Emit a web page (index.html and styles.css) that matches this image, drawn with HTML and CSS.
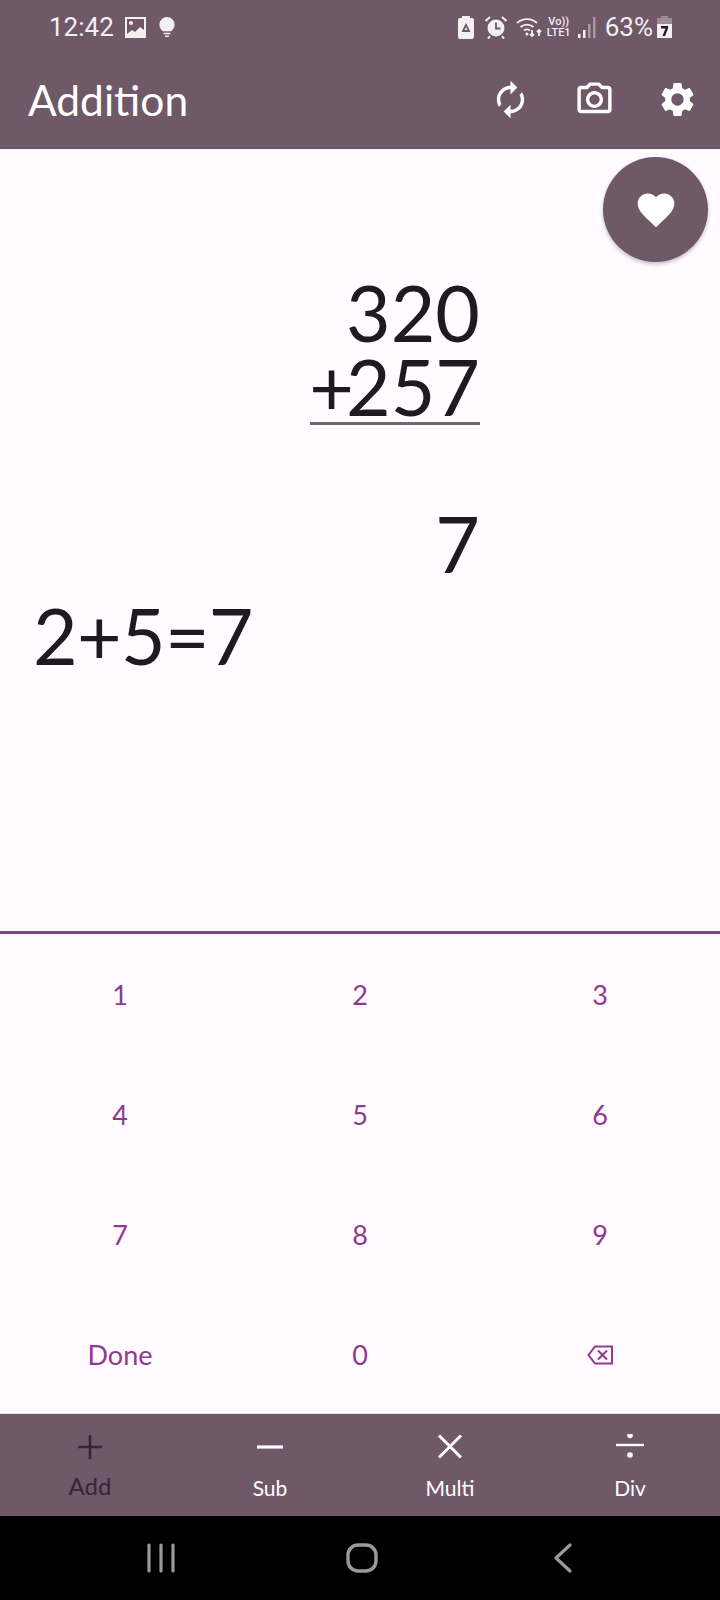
FILE: index.html
```html
<!DOCTYPE html>
<html lang="en">
<head>
    <meta charset="UTF-8">
    <meta name="viewport" content="width=device-width, initial-scale=1.0">
    <title>Addition</title>
    <link rel="stylesheet" href="styles.css">
</head>
<body>
<div class="phone">

    <header class="top">
        <div class="status">
            <div class="status-left">
                <span class="clock">12:42</span>
                <svg class="st-pic" viewBox="0 0 21 21"><path fill="#f3eff2" d="M0 0h21v21H0z"/><path fill="#6f5868" d="M2 2h17v11l-4-3-5 5-3-2-5 4z"/><circle cx="6" cy="6" r="2" fill="#f3eff2"/></svg>
                <svg class="st-bulb" viewBox="0 0 16 22"><path fill="#f3eff2" d="M8 0a8 8 0 0 1 8 8c0 3-2 5-3.500 7h-9C2 13 0 11 0 8a8 8 0 0 1 8-8zM4.500 16.500h7V18h-7zM6 19.500h4V21H6z"/></svg>
            </div>
            <div class="status-right">
                <svg class="st-save" viewBox="0 0 16 23"><path fill="#f3eff2" d="M4 0h8v2h2a2 2 0 0 1 2 2v17a2 2 0 0 1-2 2H2a2 2 0 0 1-2-2V4a2 2 0 0 1 2-2h2z"/><path fill="none" stroke="#6f5868" stroke-width="1.800" d="M5 15l3-6 3 6z"/></svg>
                <svg class="st-alarm" viewBox="0 0 24 24"><circle cx="12" cy="13" r="8.500" fill="#f3eff2"/><path fill="none" stroke="#6f5868" stroke-width="1.800" d="M12 7.500V13.500h4.500"/><path fill="none" stroke="#f3eff2" stroke-width="2" d="M1.500 6L6 2M22.500 6L18 2M6 21l-2 2.500M18 21l2 2.500"/></svg>
                <svg class="st-wifi" viewBox="0 0 28 24"><g fill="none" stroke="#f3eff2" stroke-width="1.800"><path d="M1 8a15 15 0 0 1 20 0M4.500 12a10 10 0 0 1 13 0M8 15.500a5 5 0 0 1 6 0"/><path d="M16 15v6M14 19l2 2 2-2M23 21v-6M21 17l2-2 2 2"/></g><circle cx="11" cy="19" r="1.500" fill="#f3eff2"/></svg>
                <div class="st-volte"><span>Vo))</span><span>LTE1</span></div>
                <svg class="st-signal" viewBox="0 0 18 22"><path fill="#f3eff2" d="M0 18h2.500v4H0zM5 14h2.500v8H5z"/><path fill="#a898a3" d="M10 8h2.500v14H10zM15 1h2.500v21H15z"/></svg>
                <span class="pct">63%</span>
                <svg class="st-batt" viewBox="0 0 15 22"><path fill="#9c8c97" d="M4 0h7v2h4v8H0V2h4z"/><path fill="#f3eff2" d="M0 8h15v14H0z"/><path fill="#1d1b20" d="M4 10h7v2.500L8 20H5.500l3-7.500H4z"/></svg>
            </div>
        </div>
        <div class="toolbar">
            <h1 class="title">Addition</h1>
            <div class="actions">
                <svg class="act" viewBox="0 0 24 24"><path fill="#fff" d="M12 6v3l4-4-4-4v3c-4.420 0-8 3.580-8 8 0 1.570.46 3.030 1.240 4.260L6.700 14.800c-.45-.83-.7-1.790-.7-2.800 0-3.310 2.690-6 6-6zm6.760 1.740L17.300 9.200c.44.840.7 1.790.7 2.800 0 3.310-2.690 6-6 6v-3l-4 4 4 4v-3c4.420 0 8-3.580 8-8 0-1.570-.46-3.030-1.240-4.260z"/></svg>
                <svg class="act" viewBox="0 0 24 24"><path fill="#fff" d="M20 4h-3.170L15 2H9L7.170 4H4c-1.100 0-2 .9-2 2v12c0 1.100.9 2 2 2h16c1.100 0 2-.9 2-2V6c0-1.100-.9-2-2-2zm0 14H4V6h4.050l1.830-2h4.240l1.830 2H20v12zM12 7c-2.760 0-5 2.240-5 5s2.240 5 5 5 5-2.240 5-5-2.240-5-5-5zm0 8c-1.650 0-3-1.350-3-3s1.350-3 3-3 3 1.350 3 3-1.350 3-3 3z"/></svg>
                <svg class="act" viewBox="0 0 24 24"><path fill="#fff" d="M19.140 12.940c.04-.3.060-.61.060-.94 0-.32-.02-.64-.07-.94l2.030-1.580c.18-.14.230-.41.120-.61l-1.920-3.320c-.12-.22-.37-.29-.59-.22l-2.390.96c-.5-.38-1.030-.7-1.620-.94l-.36-2.540c-.04-.24-.24-.41-.48-.41h-3.840c-.24 0-.43.170-.47.410l-.36 2.540c-.59.240-1.130.57-1.620.94l-2.390-.96c-.22-.08-.47 0-.59.220L2.740 8.870c-.12.210-.08.470.12.610l2.030 1.580c-.05.300-.09.630-.09.940s.02.640.07.940l-2.030 1.580c-.18.140-.23.410-.12.610l1.920 3.320c.12.220.37.290.59.220l2.390-.96c.5.380 1.030.7 1.620.94l.36 2.540c.05.240.24.410.48.410h3.840c.24 0 .44-.17.47-.41l.36-2.540c.59-.24 1.130-.56 1.620-.94l2.390.96c.22.080.47 0 .59-.22l1.920-3.320c.12-.22.070-.47-.12-.61l-2.010-1.580zM12 15.600c-1.980 0-3.600-1.620-3.600-3.600s1.620-3.600 3.600-3.600 3.600 1.620 3.600 3.600-1.620 3.600-3.600 3.600z"/></svg>
            </div>
        </div>
    </header>

    <main class="work">
        <button class="fab">
            <svg viewBox="0 0 24 24"><path fill="#fff" d="M12 21.350l-1.450-1.320C5.400 15.360 2 12.280 2 8.500 2 5.420 4.420 3 7.500 3c1.740 0 3.410.81 4.500 2.090C13.090 3.810 14.760 3 16.500 3 19.580 3 22 5.420 22 8.500c0 3.780-3.400 6.860-8.550 11.540L12 21.350z"/></svg>
        </button>
        <div class="sum">
            <div class="sum-num">320</div>
            <div class="sum-num sum-last"><span class="sum-plus">+</span><span>257</span></div>
            <div class="sum-answer">7</div>
        </div>
        <div class="hint">2+5=7</div>
    </main>

    <section class="keypad">
        <div class="key">1</div>
        <div class="key">2</div>
        <div class="key">3</div>
        <div class="key">4</div>
        <div class="key">5</div>
        <div class="key">6</div>
        <div class="key">7</div>
        <div class="key">8</div>
        <div class="key">9</div>
        <div class="key">Done</div>
        <div class="key">0</div>
        <div class="key">
            <svg class="back-key" viewBox="0 0 26 20"><path fill="none" stroke="#8e3a8e" stroke-width="2" d="M25 1.500H8L1.500 10 8 18.500h17zM11 5.500l9 9M20 5.500l-9 9"/></svg>
        </div>
    </section>

    <nav class="tabs">
        <div class="tab tab-on">
            <svg class="tab-icon" viewBox="0 0 26 26"><path fill="none" stroke="currentColor" stroke-width="2.600" d="M13 1v24M1 13h24"/></svg>
            <span class="tab-text">Add</span>
        </div>
        <div class="tab">
            <svg class="tab-icon" viewBox="0 0 26 26"><path fill="none" stroke="currentColor" stroke-width="3.200" d="M0 13h26"/></svg>
            <span class="tab-text">Sub</span>
        </div>
        <div class="tab">
            <svg class="tab-icon" viewBox="0 0 26 26"><path fill="none" stroke="currentColor" stroke-width="3" d="M2 1.500l22 22M24 1.500l-22 22"/></svg>
            <span class="tab-text">Multi</span>
        </div>
        <div class="tab">
            <svg class="tab-icon" viewBox="0 0 30 26"><path fill="none" stroke="currentColor" stroke-width="2.400" d="M1 11h28"/><circle cx="15" cy="1.500" r="2.800" fill="currentColor"/><circle cx="15" cy="21" r="2.800" fill="currentColor"/></svg>
            <span class="tab-text">Div</span>
        </div>
    </nav>

    <footer class="sysnav">
        <svg class="sys-recent" viewBox="0 0 28 30"><path fill="none" stroke="#9a9a9a" stroke-width="3.200" stroke-linecap="round" d="M2 2v26M14 2v26M26 2v26"/></svg>
        <svg class="sys-home" viewBox="0 0 32 30"><rect x="2" y="2" width="28" height="26" rx="10" fill="none" stroke="#9a9a9a" stroke-width="3.400"/></svg>
        <svg class="sys-back" viewBox="0 0 18 30"><path fill="none" stroke="#9a9a9a" stroke-width="3.200" stroke-linecap="round" stroke-linejoin="round" d="M16 2L2 15l14 13"/></svg>
    </footer>

</div>
</body>
</html>
```

FILE: styles.css
```css
* {
    box-sizing: border-box;
}
body {
    margin: 0;
    background: #fffbff;
    font-family: Lato, "Noto Sans", sans-serif;
    color: #1d1b20;
}
.phone {
    width: 720px;
    height: 1600px;
    display: flex;
    flex-direction: column;
}

/* header */
.top {
    height: 149px;
    background: #6f5868;
    border-bottom: 1px solid #64505e;
    flex-shrink: 0;
}
.status {
    height: 54px;
    padding: 0 48px 0 49px;
    display: flex;
    justify-content: space-between;
    align-items: center;
}
.status-left, .status-right {
    display: flex;
    align-items: center;
}
.clock {
    font-family: Roboto, sans-serif;
    font-size: 26px;
    color: #f3eff2;
    margin-right: 11px;
}
.st-pic { width: 21px; height: 21px; margin-right: 13px; }
.st-bulb { width: 16px; height: 21px; }
.st-save { width: 16px; height: 23px; margin-right: 10px; }
.st-alarm { width: 24px; height: 24px; margin-right: 8px; }
.st-wifi { width: 28px; height: 24px; margin-right: 2px; }
.st-volte {
    display: flex;
    flex-direction: column;
    font-family: Roboto, sans-serif;
    font-size: 11px;
    font-weight: 500;
    line-height: 11px;
    color: #f3eff2;
    width: 26px;
    margin-right: 6px;
    text-align: center;
}
.st-signal { width: 18px; height: 22px; margin-right: 9px; }
.pct {
    font-family: Roboto, sans-serif;
    font-size: 26px;
    color: #f3eff2;
    margin-right: 4px;
}
.st-batt { width: 15px; height: 22px; }
.toolbar {
    height: 90px;
    padding: 0 22px 0 28px;
    display: flex;
    justify-content: space-between;
    align-items: center;
}
.title {
    margin: 0;
    font-size: 42.500px;
    font-weight: 400;
    color: #fff;
}
.actions {
    display: flex;
    gap: 42.500px;
}
.act {
    width: 41px;
    height: 41px;
}

/* work area */
.work {
    flex: 1;
    position: relative;
    padding-top: 125px;
}
.fab {
    position: absolute;
    top: 8px;
    right: 12px;
    width: 105px;
    height: 105px;
    border: 0;
    border-radius: 50%;
    background: #6f5868;
    box-shadow: 0 2px 4px rgba(0, 0, 0, 0.25);
    display: flex;
    align-items: center;
    justify-content: center;
}
.fab svg {
    width: 44px;
    height: 44px;
}
.sum {
    width: 170px;
    margin-left: 310px;
    font-size: 77px;
    text-align: right;
}
.sum-num {
    line-height: 77px;
}
.sum-last {
    display: flex;
    justify-content: flex-end;
    border-bottom: 3px solid #6b6b6b;
    line-height: 71px;
    white-space: nowrap;
}
.sum-plus {
    letter-spacing: -8px;
}
.sum-answer {
    line-height: 90px;
    margin-top: 73px;
}
.hint {
    margin-top: 2px;
    padding-left: 33px;
    font-size: 77px;
    line-height: 90px;
    letter-spacing: -0.700px;
}

/* keypad */
.keypad {
    height: 482px;
    flex-shrink: 0;
    border-top: 3px solid #8e3a8e;
    display: grid;
    grid-template-columns: repeat(3, 1fr);
    grid-auto-rows: 120px;
    background: #fffbff;
}
.key {
    display: flex;
    align-items: center;
    justify-content: center;
    font-size: 27px;
    color: #8e3a8e;
    padding-top: 1px;
}
.back-key {
    width: 26px;
    height: 20px;
}

/* bottom tabs */
.tabs {
    height: 103px;
    flex-shrink: 0;
    background: #6f5868;
    border-top: 1px solid #e8e3e7;
    display: grid;
    grid-template-columns: repeat(4, 1fr);
}
.tab {
    display: flex;
    flex-direction: column;
    align-items: center;
    color: #fff;
    padding-top: 20px;
}
.tab-icon {
    height: 26px;
    width: 30px;
}
.tab-text {
    font-size: 21px;
    margin-top: 15px;
}
.tab-on {
    color: #3a2338;
}
.tab-on .tab-text {
    font-size: 24px;
    margin-top: 11px;
}

/* android nav */
.sysnav {
    height: 84px;
    flex-shrink: 0;
    background: #000;
    display: grid;
    grid-template-columns: repeat(3, 201px);
    padding-left: 60px;
    align-items: center;
    justify-items: center;
}
.sys-recent { width: 28px; height: 30px; }
.sys-home { width: 32px; height: 30px; }
.sys-back { width: 18px; height: 30px; }
```
